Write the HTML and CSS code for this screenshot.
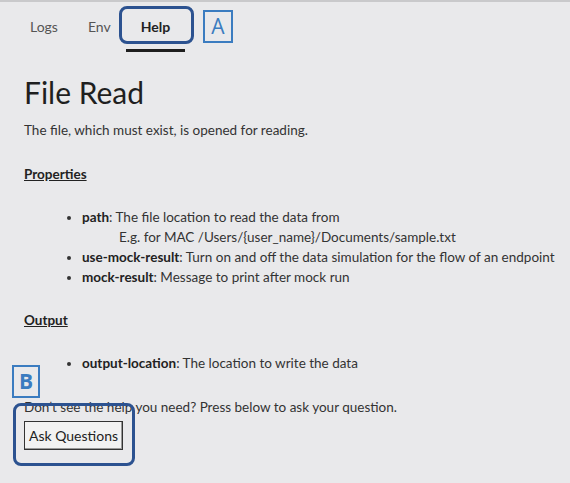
FILE: index.html
```html
<!DOCTYPE html>
<html>
<head>
<meta charset="utf-8">
<link rel="stylesheet" href="styles.css">
</head>
<body>
<nav class="tabs">
  <a class="tab">Logs</a>
  <a class="tab">Env</a>
  <a class="tab active">Help</a>
</nav>
<main class="content">
  <h1 class="title">File Read</h1>
  <p class="desc">The file, which must exist, is opened for reading.</p>
  <h2 class="section">Properties</h2>
  <ul class="props">
    <li><b>path</b>: The file location to read the data from<div class="example">E.g. for MAC /Users/{user_name}/Documents/sample.txt</div></li>
    <li><b>use-mock-result</b>: Turn on and off the data simulation for the flow of an endpoint</li>
    <li><b>mock-result</b>: Message to print after mock run</li>
  </ul>
  <h2 class="section">Output</h2>
  <ul class="props">
    <li><b>output-location</b>: The location to write the data</li>
  </ul>
  <p class="help-text">Don’t see the help you need? Press below to ask your question.</p>
  <button class="ask">Ask Questions</button>
</main>
<div class="mark mark-help"></div>
<div class="label label-a">A</div>
<div class="label label-b">B</div>
<div class="mark mark-ask"></div>
</body>
</html>
```
FILE: styles.css
```css
html, body { margin: 0; padding: 0; }
body {
  background: #e9e9eb;
  border-top: 2px solid #c9c9cb;
  font-family: Lato, "Noto Sans", sans-serif;
  color: #333;
  width: 570px;
  height: 481px;
  position: relative;
  overflow: hidden;
}
.tabs {
  display: flex;
  padding-left: 15px;
}
.tab {
  padding: 16px 15px 0;
  height: 31px;
  font-size: 14px;
  line-height: 17px;
  color: #555;
  border-bottom: 3px solid transparent;
}
.tab.active {
  font-weight: bold;
  color: #222;
  border-bottom-color: #1e1e1e;
}
.content {
  padding-left: 24px;
}
.title {
  margin: 22px 0 0;
  font-size: 30px;
  line-height: 36px;
  font-weight: normal;
  color: #1f1f1f;
}
.desc {
  margin: 10px 0 0;
  font-size: 13.5px;
  line-height: 20px;
}
.section {
  margin: 24px 0 0;
  font-size: 13.5px;
  line-height: 20px;
  font-weight: bold;
  text-decoration: underline;
  color: #222;
}
.props {
  margin: 23px 0 0;
  padding-left: 58px;
  font-size: 13.5px;
  line-height: 20px;
  white-space: nowrap;
}
.props b { color: #222; }
.example { padding-left: 37px; }
.props + .section { margin-top: 23px; }
.help-text {
  margin: 24px 0 0;
  font-size: 13.5px;
  line-height: 20px;
}
.ask {
  display: block;
  margin-top: 4px;
  width: 99px;
  height: 29px;
  font-family: inherit;
  font-size: 14px;
  color: #222;
  background: #f2f2f2;
  border: 1px solid #333;
  box-shadow: inset -1px -1px 0 #999;
  padding: 0;
  text-align: center;
}
.mark {
  position: absolute;
  border: 3px solid #2c5290;
  border-radius: 8px;
}
.mark-help { left: 119px; top: 4px; width: 69px; height: 32px; }
.mark-ask { left: 13px; top: 401px; width: 116px; height: 57px; }
.label {
  position: absolute;
  border: 2px solid #3b7cc0;
  color: #3b7cc0;
  font-size: 21px;
  line-height: 29px;
  text-align: center;
  font-family: "Open Sans", sans-serif;
}
.label-a { left: 203px; top: 8px; width: 26px; height: 29px; }
.label-b { left: 12px; top: 363px; width: 24px; height: 29px; font-weight: bold; }
```
